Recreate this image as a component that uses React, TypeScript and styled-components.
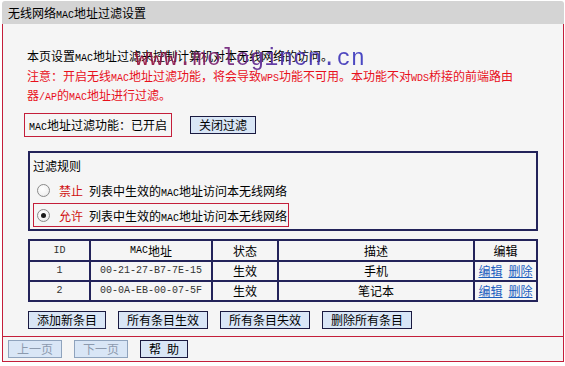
import React from "react";
import styled, { createGlobalStyle } from "styled-components";

const Global = createGlobalStyle`
  html, body { margin: 0; padding: 0; background: #ffffff; }
  body {
    font-family: "Noto Sans CJK SC", "Liberation Sans", sans-serif;
    font-size: 12px;
    color: #000;
  }
`;

const RED = "#c41e3a";
const NAVY = "#23235a";
const BG = "#f5f5f5";

const Lat = styled.span`
  font-family: "Liberation Mono", monospace;
  font-size: 10px;
  line-height: 1;
`;

const LATIN = /([A-Za-z0-9\-\/]+)/;
function Mixed({ text }: { text: string }) {
  const parts = text.split(LATIN);
  return (
    <>
      {parts.map((p, i) =>
        i % 2 === 1 ? <Lat key={i}>{p}</Lat> : <React.Fragment key={i}>{p}</React.Fragment>
      )}
    </>
  );
}

const Panel = styled.div`
  width: 562px;
  margin: 1px 1px 0 2px;
`;

const TitleBar = styled.div`
  height: 23px;
  line-height: 23px;
  background: #d4d4d4;
  padding-left: 6px;
  border-radius: 3px 3px 0 0;
`;

const Content = styled.div`
  position: relative;
  background: ${BG};
  border: 1px solid ${RED};
  border-top: none;
  padding: 22px 24px 7px 25px;
`;

const Watermark = styled.div`
  position: absolute;
  left: 132px;
  top: 22px;
  font-family: "Liberation Mono", monospace;
  font-size: 23px;
  line-height: 26px;
  letter-spacing: 0.6px;
  background: linear-gradient(90deg, #9a1236 0%, #7a2070 35%, #5030a8 65%, #3a3ac0 100%);
  -webkit-background-clip: text;
  background-clip: text;
  color: transparent;
  opacity: 0.92;
  pointer-events: none;
`;

const Intro = styled.div`
  line-height: 20px;
  margin-left: -1px;
`;

const Notes = styled.div`
  line-height: 19px;
  margin-left: -1px;
  color: #e8101c;
`;

const StatusRow = styled.div`
  display: flex;
  align-items: center;
  margin-top: 9px;
  height: 24px;
`;

const StatusBox = styled.div`
  box-sizing: border-box;
  height: 24px;
  line-height: 22px;
  border: 1px solid ${RED};
  padding: 0 4px;
  margin-left: -4px;
`;

const Button = styled.button<{ $disabled?: boolean }>`
  box-sizing: border-box;
  height: 18px;
  padding: 0 8px;
  margin: 0;
  font-family: "Noto Sans CJK SC", sans-serif;
  font-size: 12px;
  line-height: 16px;
  background: #d9e6f6;
  border: 1px solid ${(p) => (p.$disabled ? "#8fa3bd" : "#1a1a40")};
  color: ${(p) => (p.$disabled ? "#8c9aae" : "#000")};
  border-radius: 0;
  white-space: nowrap;
  cursor: pointer;
`;

const ToggleButton = styled(Button)`
  margin-left: 18px;
`;

const FilterBox = styled.div`
  box-sizing: border-box;
  width: 510px;
  margin-top: 14px;
  border: 2px solid ${NAVY};
  padding: 3px 3px 2px;
`;

const RuleTitle = styled.div`
  line-height: 20px;
`;

const RadioRow = styled.div<{ $boxed?: boolean; $gap: number }>`
  box-sizing: border-box;
  display: flex;
  align-items: center;
  width: fit-content;
  height: 24px;
  margin-top: ${(p) => p.$gap}px;
  padding: 0 1px 0 3px;
  border: 1px solid ${(p) => (p.$boxed ? RED : "transparent")};
`;

const Radio = styled.span<{ $checked?: boolean }>`
  box-sizing: border-box;
  position: relative;
  width: 13px;
  height: 13px;
  border-radius: 50%;
  border: 1px solid #8a8a8a;
  background: radial-gradient(circle at 40% 35%, #ffffff 0%, #f2f2f2 60%, #dcdcdc 100%);
  margin-right: 9px;
  flex: none;
  &::after {
    content: "";
    display: ${(p) => (p.$checked ? "block" : "none")};
    position: absolute;
    left: 3px;
    top: 3px;
    width: 5px;
    height: 5px;
    border-radius: 50%;
    background: #1a1a1a;
  }
`;

const Keyword = styled.span`
  color: #d01010;
  margin-right: 6px;
`;

const Grid = styled.div`
  box-sizing: border-box;
  display: grid;
  grid-template-columns: 59px 120px 64px 194px 61px;
  grid-template-rows: 19px 18px 18px;
  gap: 2px;
  padding: 2px;
  width: 510px;
  margin-top: 8px;
  background: ${NAVY};
`;

const Cell = styled.div<{ $mono?: boolean }>`
  background: ${BG};
  display: flex;
  align-items: center;
  justify-content: center;
  line-height: 16px;
  color: ${(p) => (p.$mono ? "#333" : "#000")};
  font-family: ${(p) =>
    p.$mono ? `"Liberation Mono", monospace` : `"Noto Sans CJK SC", sans-serif`};
  font-size: ${(p) => (p.$mono ? "10px" : "12px")};
  white-space: nowrap;
`;

const Link = styled.a`
  color: #1c5fbf;
  text-decoration: underline;
  & + & { margin-left: 6px; }
`;

const ActionRow = styled.div`
  display: flex;
  gap: 12px;
  margin-top: 9px;
`;

const Footer = styled.div`
  display: flex;
  align-items: center;
  gap: 12px;
  height: 24px;
  padding: 0 5px;
  background: ${BG};
  border: 1px solid ${RED};
  border-top: none;
`;

const rows = [
  { id: "1", mac: "00-21-27-B7-7E-15", state: "生效", desc: "手机" },
  { id: "2", mac: "00-0A-EB-00-07-5F", state: "生效", desc: "笔记本" },
];

export default function App() {
  return (
    <>
      <Global />
      <Panel>
        <TitleBar>
          <Mixed text="无线网络MAC地址过滤设置" />
        </TitleBar>
        <Content>
          <Watermark>www.mologincn.cn</Watermark>
          <Intro>
            <Mixed text="本页设置MAC地址过滤来控制计算机对本无线网络的访问。" />
          </Intro>
          <Notes>
            <Mixed text="注意：开启无线MAC地址过滤功能，将会导致WPS功能不可用。本功能不对WDS桥接的前端路由" />
            <br />
            <Mixed text="器/AP的MAC地址进行过滤。" />
          </Notes>
          <StatusRow>
            <StatusBox>
              <Mixed text="MAC地址过滤功能：已开启" />
            </StatusBox>
            <ToggleButton>关闭过滤</ToggleButton>
          </StatusRow>
          <FilterBox>
            <RuleTitle>过滤规则</RuleTitle>
            <RadioRow $gap={2}>
              <Radio />
              <Keyword>禁止</Keyword>
              <span>
                <Mixed text="列表中生效的MAC地址访问本无线网络" />
              </span>
            </RadioRow>
            <RadioRow $gap={1} $boxed>
              <Radio $checked />
              <Keyword>允许</Keyword>
              <span>
                <Mixed text="列表中生效的MAC地址访问本无线网络" />
              </span>
            </RadioRow>
          </FilterBox>
          <Grid>
            <Cell $mono>ID</Cell>
            <Cell>
              <Mixed text="MAC地址" />
            </Cell>
            <Cell>状态</Cell>
            <Cell>描述</Cell>
            <Cell>编辑</Cell>
            {rows.map((r) => (
              <React.Fragment key={r.id}>
                <Cell $mono>{r.id}</Cell>
                <Cell $mono>{r.mac}</Cell>
                <Cell>{r.state}</Cell>
                <Cell>{r.desc}</Cell>
                <Cell>
                  <Link href="#">编辑</Link>
                  <Link href="#">删除</Link>
                </Cell>
              </React.Fragment>
            ))}
          </Grid>
          <ActionRow>
            <Button>添加新条目</Button>
            <Button>所有条目生效</Button>
            <Button>所有条目失效</Button>
            <Button>删除所有条目</Button>
          </ActionRow>
        </Content>
        <Footer>
          <Button $disabled>上一页</Button>
          <Button $disabled>下一页</Button>
          <Button>帮{"\u2002"}助</Button>
        </Footer>
      </Panel>
    </>
  );
}
